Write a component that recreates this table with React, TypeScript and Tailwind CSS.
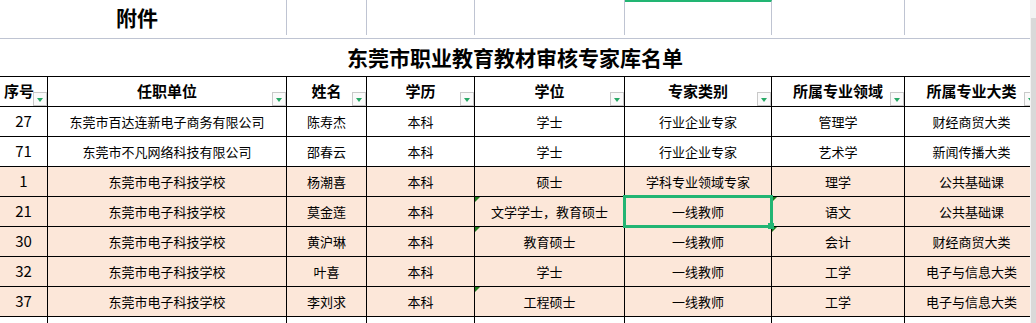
import React from "react";
import clsx from "clsx";

type Row = {
  no: string;
  org: string;
  name: string;
  edu: string;
  degree: string;
  type: string;
  field: string;
  category: string;
  peach: boolean;
  marks: number[];
  selected?: number;
};

const rows: Row[] = [
  { no: "27", org: "东莞市百达连新电子商务有限公司", name: "陈寿杰", edu: "本科", degree: "学士", type: "行业企业专家", field: "管理学", category: "财经商贸大类", peach: false, marks: [] },
  { no: "71", org: "东莞市不凡网络科技有限公司", name: "邵春云", edu: "本科", degree: "学士", type: "行业企业专家", field: "艺术学", category: "新闻传播大类", peach: false, marks: [] },
  { no: "1", org: "东莞市电子科技学校", name: "杨潮喜", edu: "本科", degree: "硕士", type: "学科专业领域专家", field: "理学", category: "公共基础课", peach: true, marks: [] },
  { no: "21", org: "东莞市电子科技学校", name: "莫金莲", edu: "本科", degree: "文学学士，教育硕士", type: "一线教师", field: "语文", category: "公共基础课", peach: true, marks: [4, 6], selected: 5 },
  { no: "30", org: "东莞市电子科技学校", name: "黄沪琳", edu: "本科", degree: "教育硕士", type: "一线教师", field: "会计", category: "财经商贸大类", peach: true, marks: [4, 6] },
  { no: "32", org: "东莞市电子科技学校", name: "叶喜", edu: "本科", degree: "学士", type: "一线教师", field: "工学", category: "电子与信息大类", peach: true, marks: [] },
  { no: "37", org: "东莞市电子科技学校", name: "李刘求", edu: "本科", degree: "工程硕士", type: "一线教师", field: "工学", category: "电子与信息大类", peach: true, marks: [4] },
];

const headers = ["序号", "任职单位", "姓名", "学历", "学位", "专家类别", "所属专业领域", "所属专业大类"];

const grid = "grid grid-cols-[48px_239px_80px_108px_150px_147px_133px_134px]";

const FilterButton = () => (
  <div className="absolute right-0 bottom-0 w-[14px] h-[14px] border border-[#c9c9c9] bg-[#fafafa] flex items-center justify-center">
    <div className="w-0 h-0 border-l-[3px] border-r-[3px] border-t-[4px] border-l-transparent border-r-transparent border-t-[#27a865] mt-[1px]" />
  </div>
);

const Mark = () => (
  <div className="absolute left-0 top-0 w-0 h-0 border-t-[5px] border-r-[5px] border-t-[#1d7a1d] border-r-transparent" />
);

const App = () => {
  return (
    <div className="w-[1036px] h-[323px] overflow-hidden bg-white flex font-['Noto_Sans_CJK_SC',sans-serif] text-black">
      <div className="w-[1030px] overflow-hidden flex flex-col">
        {/* row 1 */}
        <div className={clsx(grid, "h-[39px] shrink-0 border-b border-[#bfc4d2]")}>
          <div className="col-span-2 border-r border-[#bfc4d2] flex items-center justify-center pr-3 text-[21px] font-bold">
            附件
          </div>
          <div className="border-r border-[#bfc4d2]" />
          <div className="border-r border-[#bfc4d2]" />
          <div className="border-r border-[#bfc4d2]" />
          <div className="border-r border-[#bfc4d2] border-t-2 border-t-[#22b573]" />
          <div className="border-r border-[#bfc4d2]" />
          <div className="border-r border-[#bfc4d2]" />
          <div />
        </div>

        {/* title */}
        <div className="h-[38px] shrink-0 border-b border-black flex items-center justify-center text-[21px] font-bold">
          东莞市职业教育教材审核专家库名单
        </div>

        {/* header */}
        <div className={clsx(grid, "h-[30px] shrink-0")}>
          {headers.map((h, i) => (
            <div
              key={h}
              className={clsx(
                "relative border-r border-b border-black flex items-center text-[15px] font-bold whitespace-nowrap",
                i === 0 ? "justify-start pl-[4px]" : "justify-center"
              )}
            >
              {h}
              <FilterButton />
            </div>
          ))}
        </div>

        {/* data */}
        {rows.map((r) => {
          const cells = [r.no, r.org, r.name, r.edu, r.degree, r.type, r.field, r.category];
          return (
            <div key={r.no} className={clsx(grid, "h-[30px] shrink-0", r.peach ? "bg-[#fce7d9]" : "bg-white")}>
              {cells.map((c, i) => (
                <div
                  key={i}
                  className={clsx(
                    "relative border-r border-b border-black flex items-center justify-center whitespace-nowrap",
                    i === 0 ? "text-[15px]" : "text-[13px]"
                  )}
                >
                  {r.marks.includes(i) && <Mark />}
                  {c}
                  {r.selected === i && (
                    <div className="absolute inset-[-2px] border-[3px] border-[#22b573] z-10">
                      <div className="absolute right-[-4px] bottom-[-4px] w-[6px] h-[6px] bg-[#22b573]" />
                    </div>
                  )}
                </div>
              ))}
            </div>
          );
        })}

        {/* next row, cut off */}
        <div className={clsx(grid, "h-[30px] shrink-0 bg-white")}>
          {headers.map((h) => (
            <div key={h} className="border-r border-b border-black" />
          ))}
        </div>
      </div>

      {/* scrollbar */}
      <div className="w-[6px] bg-[#f3f3f3] flex flex-col pl-[1px]">
        <div className="mt-[18px] flex-1 bg-[#d9d9d9]" />
      </div>
    </div>
  );
};

export default App;
